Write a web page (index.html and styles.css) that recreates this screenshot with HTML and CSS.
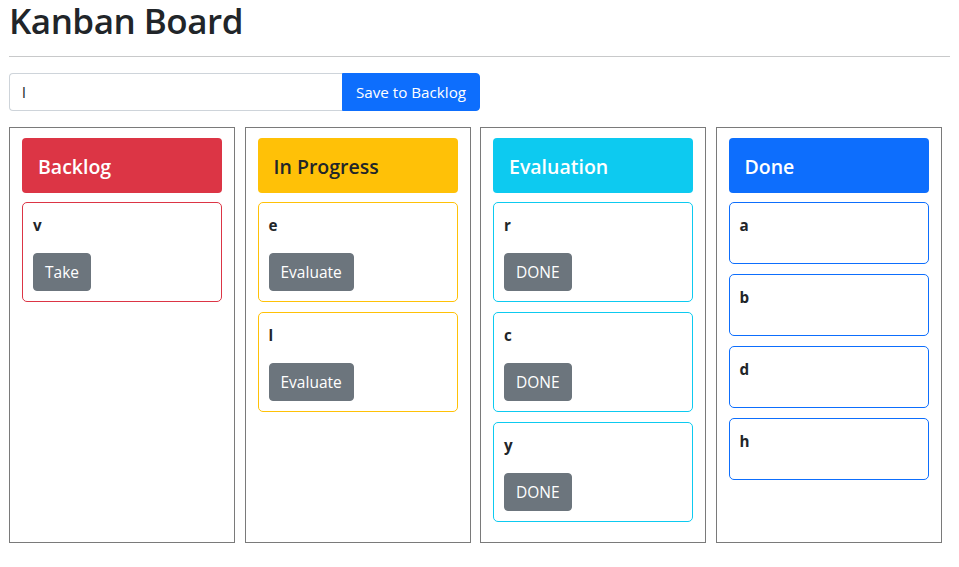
FILE: index.html
```html
<!DOCTYPE html>
<html lang="en">
<head>
<meta charset="utf-8">
<title>Kanban Board</title>
<link rel="stylesheet" href="styles.css">
</head>
<body>
<div class="page">
  <h1 class="title">Kanban Board</h1>
  <hr class="rule">
  <div class="add">
    <input class="add-input" type="text" value="l">
    <button class="btn btn-primary add-btn">Save to Backlog</button>
  </div>
  <div class="board">
    <section class="col">
      <div class="col-head head-danger">Backlog</div>
      <div class="card card-danger">
        <div class="card-title">v</div>
        <button class="btn btn-gray">Take</button>
      </div>
    </section>
    <section class="col">
      <div class="col-head head-warning">In Progress</div>
      <div class="card card-warning">
        <div class="card-title">e</div>
        <button class="btn btn-gray">Evaluate</button>
      </div>
      <div class="card card-warning">
        <div class="card-title">l</div>
        <button class="btn btn-gray">Evaluate</button>
      </div>
    </section>
    <section class="col">
      <div class="col-head head-info">Evaluation</div>
      <div class="card card-info">
        <div class="card-title">r</div>
        <button class="btn btn-gray">DONE</button>
      </div>
      <div class="card card-info">
        <div class="card-title">c</div>
        <button class="btn btn-gray">DONE</button>
      </div>
      <div class="card card-info">
        <div class="card-title">y</div>
        <button class="btn btn-gray">DONE</button>
      </div>
    </section>
    <section class="col">
      <div class="col-head head-primary">Done</div>
      <div class="card card-primary"><div class="card-title">a</div></div>
      <div class="card card-primary"><div class="card-title">b</div></div>
      <div class="card card-primary"><div class="card-title">d</div></div>
      <div class="card card-primary"><div class="card-title">h</div></div>
    </section>
  </div>
</div>
</body>
</html>
```

FILE: styles.css
```css
* { box-sizing: border-box; }
html, body { margin: 0; padding: 0; background: #fff; }
body {
  font-family: "Open Sans", "Noto Sans", sans-serif;
  font-size: 15.2px;
  line-height: 24px;
  color: #212529;
}
.page { padding: 0 9px; }
.title {
  margin: 0;
  font-size: 35px;
  line-height: 42px;
  font-weight: 600;
  letter-spacing: -0.5px;
}
.rule {
  margin: 14px 0 16px;
  border: 0;
  border-top: 1px solid #c8c9ca;
  height: 0;
}
.add { display: flex; width: 471px; height: 38px; }
.add-input {
  flex: 1;
  min-width: 0;
  height: 38px;
  border: 1px solid #ced4da;
  border-right: 0;
  border-radius: 4px 0 0 4px;
  padding: 0 12px;
  font: inherit;
  color: #212529;
  outline: none;
}
.btn {
  font: inherit;
  font-size: 15.5px;
  height: 38px;
  padding: 0 12px;
  border: 1px solid transparent;
  border-radius: 4px;
  cursor: pointer;
  color: #fff;
}
.btn-primary { background: #0d6efd; border-color: #0d6efd; }
.add-btn { width: 138px; border-radius: 0 4px 4px 0; padding: 0; font-size: 15.2px; }
.btn-gray { background: #6c757d; border-color: #6c757d; padding: 0 11px; }
.board {
  margin-top: 16px;
  display: grid;
  grid-template-columns: repeat(4, 226px);
  column-gap: 9.5px;
}
.col {
  height: 416px;
  border: 1px solid #7a7a7a;
  padding: 10px 12px;
  display: flex;
  flex-direction: column;
  gap: 9px;
}
.col-head {
  height: 55px;
  display: flex;
  align-items: center;
  padding: 3px 16px 0;
  border-radius: 4px;
  font-size: 19.5px;
  font-weight: 600;
  color: #fff;
}
.head-danger { background: #dc3545; }
.head-warning { background: #ffc107; color: #212529; }
.head-info { background: #0dcaf0; }
.head-primary { background: #0d6efd; }
.card {
  border: 1px solid;
  border-radius: 5px;
  padding: 10px;
  margin-bottom: 1px;
}
.card-danger { border-color: #dc3545; }
.card-warning { border-color: #ffc107; }
.card-info { border-color: #0dcaf0; }
.card-primary { border-color: #0d6efd; }
.card-title {
  font-weight: 700;
  line-height: 24px;
  margin-bottom: 16px;
}
.card .btn { display: block; }
```
